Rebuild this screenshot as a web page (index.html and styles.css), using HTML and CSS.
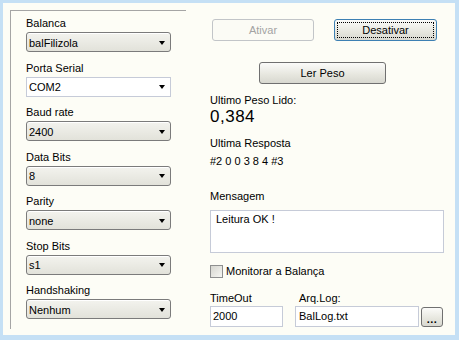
FILE: index.html
```html
<!DOCTYPE html>
<html lang="pt">
<head>
    <meta charset="UTF-8">
    <title>Balança</title>
    <link rel="stylesheet" href="styles.css">
</head>
<body>
    <div class="window">
        <!-- configuração da porta -->
        <div class="group">
            <div class="field">
                <div class="label">Balanca</div>
                <div class="combo"><span>balFilizola</span><i class="arrow"></i></div>
            </div>
            <div class="field">
                <div class="label">Porta Serial</div>
                <div class="combo flat"><span>COM2</span><i class="arrow"></i></div>
            </div>
            <div class="field">
                <div class="label">Baud rate</div>
                <div class="combo"><span>2400</span><i class="arrow"></i></div>
            </div>
            <div class="field">
                <div class="label">Data Bits</div>
                <div class="combo"><span>8</span><i class="arrow"></i></div>
            </div>
            <div class="field">
                <div class="label">Parity</div>
                <div class="combo"><span>none</span><i class="arrow"></i></div>
            </div>
            <div class="field">
                <div class="label">Stop Bits</div>
                <div class="combo"><span>s1</span><i class="arrow"></i></div>
            </div>
            <div class="field">
                <div class="label">Handshaking</div>
                <div class="combo"><span>Nenhum</span><i class="arrow"></i></div>
            </div>
        </div>

        <!-- leitura -->
        <div class="panel">
            <div class="btn-row">
                <button class="btn btn-ativar" disabled>Ativar</button>
                <button class="btn btn-desativar">Desativar</button>
            </div>
            <button class="btn btn-ler">Ler Peso</button>

            <div class="label peso-label">Ultimo Peso Lido:</div>
            <div class="peso">0,384</div>

            <div class="label resp-label">Ultima Resposta</div>
            <div class="resposta">#2 0 0 3 8 4 #3</div>

            <div class="label msg-label">Mensagem</div>
            <div class="memo">Leitura OK !</div>

            <div class="check-row">
                <span class="checkbox"></span>
                <span>Monitorar a Balança</span>
            </div>

            <div class="bottom-row">
                <div class="col-timeout">
                    <div class="label">TimeOut</div>
                    <div class="edit">2000</div>
                </div>
                <div class="col-log">
                    <div class="label log-label">Arq.Log:</div>
                    <div class="log-line">
                        <div class="edit edit-log">BalLog.txt</div>
                        <button class="btn btn-dots">...</button>
                    </div>
                </div>
            </div>
        </div>
    </div>
</body>
</html>
```

FILE: styles.css
```css
* {
    box-sizing: border-box;
}
body {
    margin: 0;
    font-family: "Liberation Sans", Arial, sans-serif;
    font-size: 11px;
    color: #000;
    background-color: #c5e0f5;
}
.window {
    width: 459px;
    height: 340px;
    display: flex;
    padding: 7px 0 0 7px;
    border-style: solid;
    border-color: #c5e0f5;
    border-width: 3px 4px 5px 3px;
    background-color: #fdfdf6; /* fundo creme */
}
.label {
    line-height: 13px;
    white-space: nowrap;
}

/* grupo da esquerda */
.group {
    width: 176px;
    height: 319px;
    display: flex;
    flex-direction: column;
    gap: 9.5px;
    padding: 6px 0 0 15px;
    border-top: 1px solid #a5a5a5;
    border-left: 1px solid #a5a5a5;
}
.field .label {
    margin-bottom: 2px;
}
.combo {
    width: 145px;
    height: 20px;
    display: flex;
    align-items: center;
    justify-content: space-between;
    padding: 1px 5px 0 2px;
    border: 1px solid #7b7b7b;
    border-radius: 3px;
    background: linear-gradient(#f3f3ee, #e2e2da);
    box-shadow: inset 0 1px 0 #fff;
}
.combo.flat {
    border-color: #c6cbd8;
    border-radius: 0;
    background: #fff;
    box-shadow: none;
}
.arrow {
    width: 0;
    height: 0;
    border-left: 3.5px solid transparent;
    border-right: 3.5px solid transparent;
    border-top: 4px solid #000;
}

/* painel da direita */
.panel {
    width: 236px;
    margin-left: 24px;
    display: flex;
    flex-direction: column;
}
.btn {
    height: 22px;
    padding: 0;
    font-family: inherit;
    font-size: 11px;
    color: #000;
    border: 1px solid #707070;
    border-radius: 3px;
    background: linear-gradient(#fbfbf9, #e6e6de 60%, #d8d8d0);
}
.btn-row {
    display: flex;
    gap: 20px;
    margin-top: 9px;
    padding-left: 2px;
}
.btn-ativar {
    width: 102px;
    color: #a3a3a3;
    border-color: #c2c5c8;
    background: #fbfbf5;
}
.btn-desativar {
    width: 103px;
    border-color: #3d80b3;
    outline: 1px dotted #000;
    outline-offset: -4px;
}
.btn-ler {
    width: 127px;
    margin: 21px 0 0 49px;
}
.peso-label {
    margin-top: 10px;
}
.peso {
    font-size: 17px;
    line-height: 20px;
    letter-spacing: 0.5px;
}
.resp-label {
    margin-top: 10px;
}
.resposta {
    margin-top: 5px;
    line-height: 13px;
}
.msg-label {
    margin-top: 22px;
}
.memo {
    width: 234px;
    height: 43px;
    margin-top: 7px;
    padding: 2px 5px;
    line-height: 13px;
    background: #fff;
    border: 1px solid #c6cbd8;
}
.check-row {
    display: flex;
    align-items: center;
    gap: 3px;
    margin-top: 12px;
    line-height: 13px;
}
.checkbox {
    width: 13px;
    height: 13px;
    border: 1px solid #8e8f8f;
    background: linear-gradient(135deg, #d6d6d0, #f6f6f2);
}
.bottom-row {
    display: flex;
    margin-top: 14px;
}
.col-timeout {
    width: 73px;
}
.col-log {
    margin-left: 12px;
}
.log-label {
    padding-left: 4px;
}
.bottom-row .label {
    margin-bottom: 1px;
}
.edit {
    height: 21px;
    padding-left: 2px;
    line-height: 19px;
    background: #fff;
    border: 1px solid #c6cbd8;
}
.log-line {
    display: flex;
    align-items: flex-start;
    gap: 2px;
}
.edit-log {
    width: 124px;
    padding-left: 3px;
}
.btn-dots {
    width: 22px;
    height: 20px;
    margin-top: 1px;
    padding-top: 4px;
    line-height: 10px;
    font-weight: bold;
    letter-spacing: 0.5px;
}
```
